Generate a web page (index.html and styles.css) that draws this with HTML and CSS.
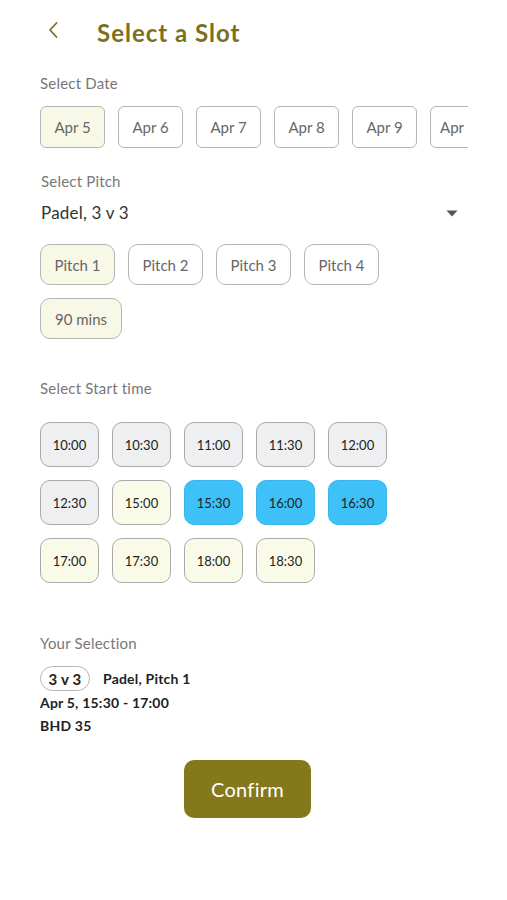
FILE: index.html
```html
<!DOCTYPE html>
<html>
<head>
<meta charset="utf-8">
<link rel="stylesheet" href="styles.css">
</head>
<body>
<div class="page">
  <header class="header">
    <svg class="back" width="12" height="18" viewBox="0 0 12 18"><path d="M9.5 2 L3 9 L9.5 16" fill="none" stroke="#7a7020" stroke-width="1.8" stroke-linecap="round" stroke-linejoin="round"/></svg>
    <h1 class="title">Select a Slot</h1>
  </header>

  <div class="label label-date">Select Date</div>
  <div class="dates">
    <div class="chip date sel">Apr 5</div>
    <div class="chip date">Apr 6</div>
    <div class="chip date">Apr 7</div>
    <div class="chip date">Apr 8</div>
    <div class="chip date">Apr 9</div>
    <div class="chip date">Apr 10</div>
  </div>

  <div class="label label-pitch">Select Pitch</div>
  <div class="dropdown">
    <span>Padel, 3 v 3</span>
    <svg class="caret" width="12" height="7" viewBox="0 0 12 7"><path d="M0.5 0.5 H11.5 L6 6.5 Z" fill="#555"/></svg>
  </div>
  <div class="pitches">
    <div class="chip pitch sel">Pitch 1</div>
    <div class="chip pitch">Pitch 2</div>
    <div class="chip pitch">Pitch 3</div>
    <div class="chip pitch">Pitch 4</div>
  </div>
  <div class="pitches durations">
    <div class="chip pitch sel">90 mins</div>
  </div>

  <div class="label label-time">Select Start time</div>
  <div class="times">
    <div class="time off">10:00</div>
    <div class="time off">10:30</div>
    <div class="time off">11:00</div>
    <div class="time off">11:30</div>
    <div class="time off">12:00</div>
    <div class="time off">12:30</div>
    <div class="time free">15:00</div>
    <div class="time picked">15:30</div>
    <div class="time picked">16:00</div>
    <div class="time picked">16:30</div>
    <div class="time free">17:00</div>
    <div class="time free">17:30</div>
    <div class="time free">18:00</div>
    <div class="time free">18:30</div>
  </div>

  <div class="label label-sel">Your Selection</div>
  <div class="summary">
    <div class="sum-row"><span class="pill">3 v 3</span><span>Padel, Pitch 1</span></div>
    <div class="sum-line first">Apr 5, 15:30 - 17:00</div>
    <div class="sum-line">BHD 35</div>
  </div>

  <div class="actions">
    <button class="confirm">Confirm</button>
  </div>
</div>
</body>
</html>
```
FILE: styles.css
```css
* { box-sizing: border-box; }
html, body { margin: 0; padding: 0; background: #fff; }
body { font-family: Lato, "Noto Sans", sans-serif; color: #333; }
.page { width: 507px; padding-left: 40px; }

.header { display: flex; align-items: center; height: 64px; }
.back { margin-left: 7px; margin-top: -4px; }
.title { margin: 0 0 0 38px; font-size: 24px; font-weight: 700; color: #7a7020; letter-spacing: 1px; }

.label { font-size: 15px; color: #777; letter-spacing: 0.2px; }
.label-date { margin-top: 10px; }
.dates { display: flex; gap: 13px; width: 428px; overflow: hidden; margin-top: 14px; }
.chip { flex: none; display: flex; align-items: center; justify-content: center; border: 1.5px solid #b5b5b5; background: #fff; color: #666; font-size: 15px; }
.chip.sel { background: #f8f8e6; }
.date { width: 65px; height: 42px; border-radius: 6px; }

.label-pitch { margin-top: 24px; padding-left: 1px; }
.dropdown { display: flex; justify-content: space-between; align-items: center; width: 418px; margin-top: 12px; font-size: 17px; color: #333; padding-left: 1px; letter-spacing: 0.2px; }
.caret { margin-top: 2px; }
.pitches { display: flex; gap: 13px; margin-top: 21px; }
.pitch { width: 75px; height: 41px; border-radius: 10px; }
.durations { margin-top: 13px; }
.durations .pitch { width: 82px; }

.label-time { margin-top: 40px; }
.times { display: grid; grid-template-columns: repeat(5, 59px); column-gap: 13px; row-gap: 13px; margin-top: 25px; }
.time { height: 45px; border-radius: 10px; border: 1.5px solid #aaa; display: flex; align-items: center; justify-content: center; font-size: 13px; color: #222; }
.time.off { background: #eeeff1; }
.time.free { background: #fafae8; }
.time.picked { background: #3ec0f8; border-color: #3ab3e6; }

.label-sel { margin-top: 51px; }
.summary { margin-top: 14px; font-size: 14px; font-weight: 700; color: #222; letter-spacing: 0.2px; }
.sum-row { display: flex; align-items: center; gap: 13px; }
.pill { display: inline-flex; align-items: center; justify-content: center; height: 25px; width: 50px; border: 1.5px solid #b5b5b5; border-radius: 13px; font-size: 15px; }
.sum-line { margin-top: 6px; }
.sum-line.first { margin-top: 3px; }

.actions { width: 415px; display: flex; justify-content: center; margin-top: 26px; }
.confirm { width: 127px; height: 58px; border: none; border-radius: 10px; background: #85781c; color: #fff; font-family: inherit; font-size: 20px; letter-spacing: 0.3px; }
```
